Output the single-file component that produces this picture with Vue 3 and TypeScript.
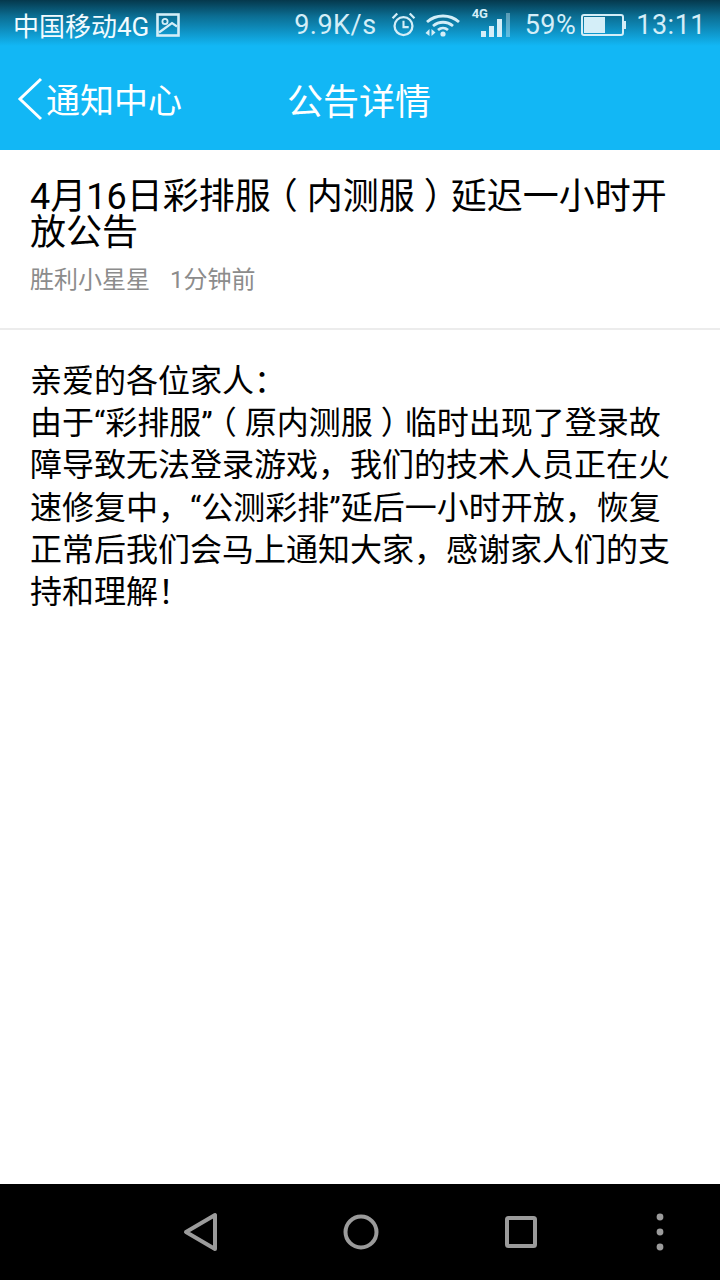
<template>
  <div class="phone">
    <div class="status-bar">
      <div class="status-left">
        <span class="carrier">中国移动4G</span>
        <svg class="pic-icon" width="24" height="24" viewBox="0 0 24 24">
          <rect x="1.5" y="1.5" width="21" height="21" fill="none" stroke="currentColor" stroke-width="2.6" />
          <circle cx="9" cy="8.5" r="2.6" fill="none" stroke="currentColor" stroke-width="1.8" />
          <path d="M3 19.5 L16 10 L21 13.5" fill="none" stroke="currentColor" stroke-width="2.2" />
        </svg>
      </div>
      <div class="status-right">
        <span class="speed">9.9K/s</span>
        <svg class="alarm" width="25" height="25" viewBox="0 0 24 24">
          <circle cx="12" cy="13.5" r="8.6" fill="none" stroke="currentColor" stroke-width="2.2" />
          <path d="M12 8.5 V14.5 H17" fill="none" stroke="currentColor" stroke-width="2" />
          <path d="M1.5 6 L6 1.5 M22.5 6 L18 1.5" stroke="currentColor" stroke-width="2.2" />
        </svg>
        <svg class="wifi" width="36" height="24" viewBox="0 0 36 24">
          <path d="M2 9 C11 1 25 1 34 9" fill="none" stroke="currentColor" stroke-width="2.8" />
          <path d="M8 13 C14 8 22 8 28 13" fill="none" stroke="currentColor" stroke-width="2.8" />
          <path d="M13 17 C16 14.5 20 14.5 23 17" fill="none" stroke="currentColor" stroke-width="2.8" />
          <circle cx="18" cy="21" r="2.6" fill="currentColor" />
          <path d="M4.5 16 V23 L0.5 20 Z M6.5 16 V23 L10.5 19.5 Z" fill="currentColor" />
        </svg>
        <div class="signal">
          <span class="signal-4g">4G</span>
          <svg width="29" height="24" viewBox="0 0 29 24">
            <rect x="0" y="18" width="5" height="6" fill="currentColor" />
            <rect x="8" y="13" width="5" height="11" fill="currentColor" />
            <rect x="16" y="6" width="5" height="18" fill="currentColor" />
            <rect x="25" y="0" width="4" height="24" fill="currentColor" opacity="0.4" />
          </svg>
        </div>
        <span class="battery-pct">59%</span>
        <svg class="battery" width="45" height="22" viewBox="0 0 45 22">
          <rect x="1" y="1" width="41" height="20" rx="2" fill="none" stroke="currentColor" stroke-width="2" />
          <rect x="3" y="3" width="21" height="16" fill="currentColor" />
          <rect x="43" y="7" width="2" height="8" fill="currentColor" />
        </svg>
        <span class="clock">13:11</span>
      </div>
    </div>

    <header class="nav">
      <div class="back">
        <svg width="28" height="44" viewBox="0 0 28 44">
          <path d="M25 2 L4 22 L25 42" fill="none" stroke="#fff" stroke-width="3" />
        </svg>
        <span class="back-text">通知中心</span>
      </div>
      <h1 class="nav-title">公告详情</h1>
    </header>

    <main class="content">
      <section class="head">
        <h2 class="title">4月16日彩排服<span class="paren">（</span>内测服<span class="paren">）</span>延迟一小时开<br />放公告</h2>
        <div class="meta">
          <span>胜利小星星</span>
          <span>1分钟前</span>
        </div>
      </section>
      <article class="body">
        <p>亲爱的各位家人：</p>
        <p>由于“彩排服”<span class="paren">（</span>原内测服<span class="paren">）</span>临时出现了登录故</p>
        <p>障导致无法登录游戏，我们的技术人员正在火</p>
        <p>速修复中，“公测彩排”延后一小时开放，恢复</p>
        <p>正常后我们会马上通知大家，感谢家人们的支</p>
        <p>持和理解！</p>
      </article>
    </main>

    <footer class="nav-bar">
      <svg width="36" height="40" viewBox="0 0 36 40">
        <path d="M3 20 L32 3 V37 Z" fill="none" stroke="#9b9b9b" stroke-width="4" stroke-linejoin="round" />
      </svg>
      <svg width="36" height="36" viewBox="0 0 36 36">
        <circle cx="18" cy="18" r="15.5" fill="none" stroke="#9b9b9b" stroke-width="4" />
      </svg>
      <svg width="32" height="32" viewBox="0 0 32 32">
        <rect x="2" y="2" width="28" height="28" rx="1.5" fill="none" stroke="#9b9b9b" stroke-width="4" />
      </svg>
      <svg width="8" height="38" viewBox="0 0 8 38">
        <circle cx="4" cy="4" r="3.4" fill="#9b9b9b" />
        <circle cx="4" cy="19" r="3.4" fill="#9b9b9b" />
        <circle cx="4" cy="34" r="3.4" fill="#9b9b9b" />
      </svg>
    </footer>
  </div>
</template>

<script setup lang="ts">
// static screen, nothing to wire up
</script>

<style>
html,
body {
  margin: 0;
  background: #fff;
}
</style>

<style scoped>
.phone {
  width: 720px;
  height: 1280px;
  display: flex;
  flex-direction: column;
  overflow: hidden;
  font-family: "Roboto", "Noto Sans CJK SC", sans-serif;
  text-spacing-trim: space-all;
}

.status-bar {
  height: 50px;
  flex: none;
  display: flex;
  align-items: center;
  justify-content: space-between;
  padding: 0 14px 1px 13px;
  box-sizing: border-box;
  background: linear-gradient(#05384c 0, #0b6d92 16px, #12b7f5 46px);
  color: #d4eef8;
}

.status-left,
.status-right {
  display: flex;
  align-items: center;
}

.carrier {
  font-size: 26px;
  color: #f2fbff;
}

.pic-icon {
  margin-left: 7px;
}

.speed,
.battery-pct,
.clock {
  font-size: 27px;
  letter-spacing: 0.5px;
}

.alarm {
  margin-left: 14px;
}

.wifi {
  margin-left: 9px;
}

.signal {
  position: relative;
  margin-left: 20px;
  width: 29px;
  height: 24px;
  display: flex;
}

.signal-4g {
  position: absolute;
  left: -9px;
  top: -6px;
  font-size: 13px;
  line-height: 14px;
  font-weight: 700;
}

.battery-pct {
  margin-left: 15px;
}

.battery {
  margin-left: 5px;
}

.clock {
  margin-left: 10px;
}

.nav {
  height: 100px;
  flex: none;
  display: flex;
  align-items: center;
  padding: 0 0 3px 16px;
  box-sizing: border-box;
  background: #12b7f5;
  color: #fff;
}

.back {
  display: flex;
  align-items: center;
  width: 271px;
}

.back-text {
  margin-left: 2px;
  font-size: 34px;
}

.nav-title {
  margin: 0;
  font-size: 36px;
  font-weight: 400;
}

.content {
  flex: 1;
  background: #fff;
  color: #000;
}

.head {
  height: 180px;
  box-sizing: border-box;
  padding: 29px 30px 0;
  border-bottom: 2px solid #ececec;
}

.title {
  margin: 0;
  font-size: 36px;
  line-height: 36px;
  font-weight: 400;
}

/* half-width bracket padded back out, so it sits centred in a full cell */
.paren {
  display: inline-block;
  line-height: 0;
  padding: 0 0.25em;
  font-feature-settings: "halt";
}

.meta {
  margin-top: 9px;
  display: flex;
  gap: 20px;
  font-size: 24px;
  color: #8c8c8c;
}

.body {
  padding: 30px 30px 0;
  font-size: 32px;
  line-height: 42.2px;
}

.body p {
  margin: 0;
  white-space: nowrap;
}

.nav-bar {
  height: 96px;
  flex: none;
  background: #000;
  display: flex;
  align-items: center;
  padding-left: 183px;
}

.nav-bar svg:nth-child(2) {
  margin-left: 124px;
}

.nav-bar svg:nth-child(3) {
  margin-left: 126px;
}

.nav-bar svg:nth-child(4) {
  margin-left: 119px;
}
</style>
